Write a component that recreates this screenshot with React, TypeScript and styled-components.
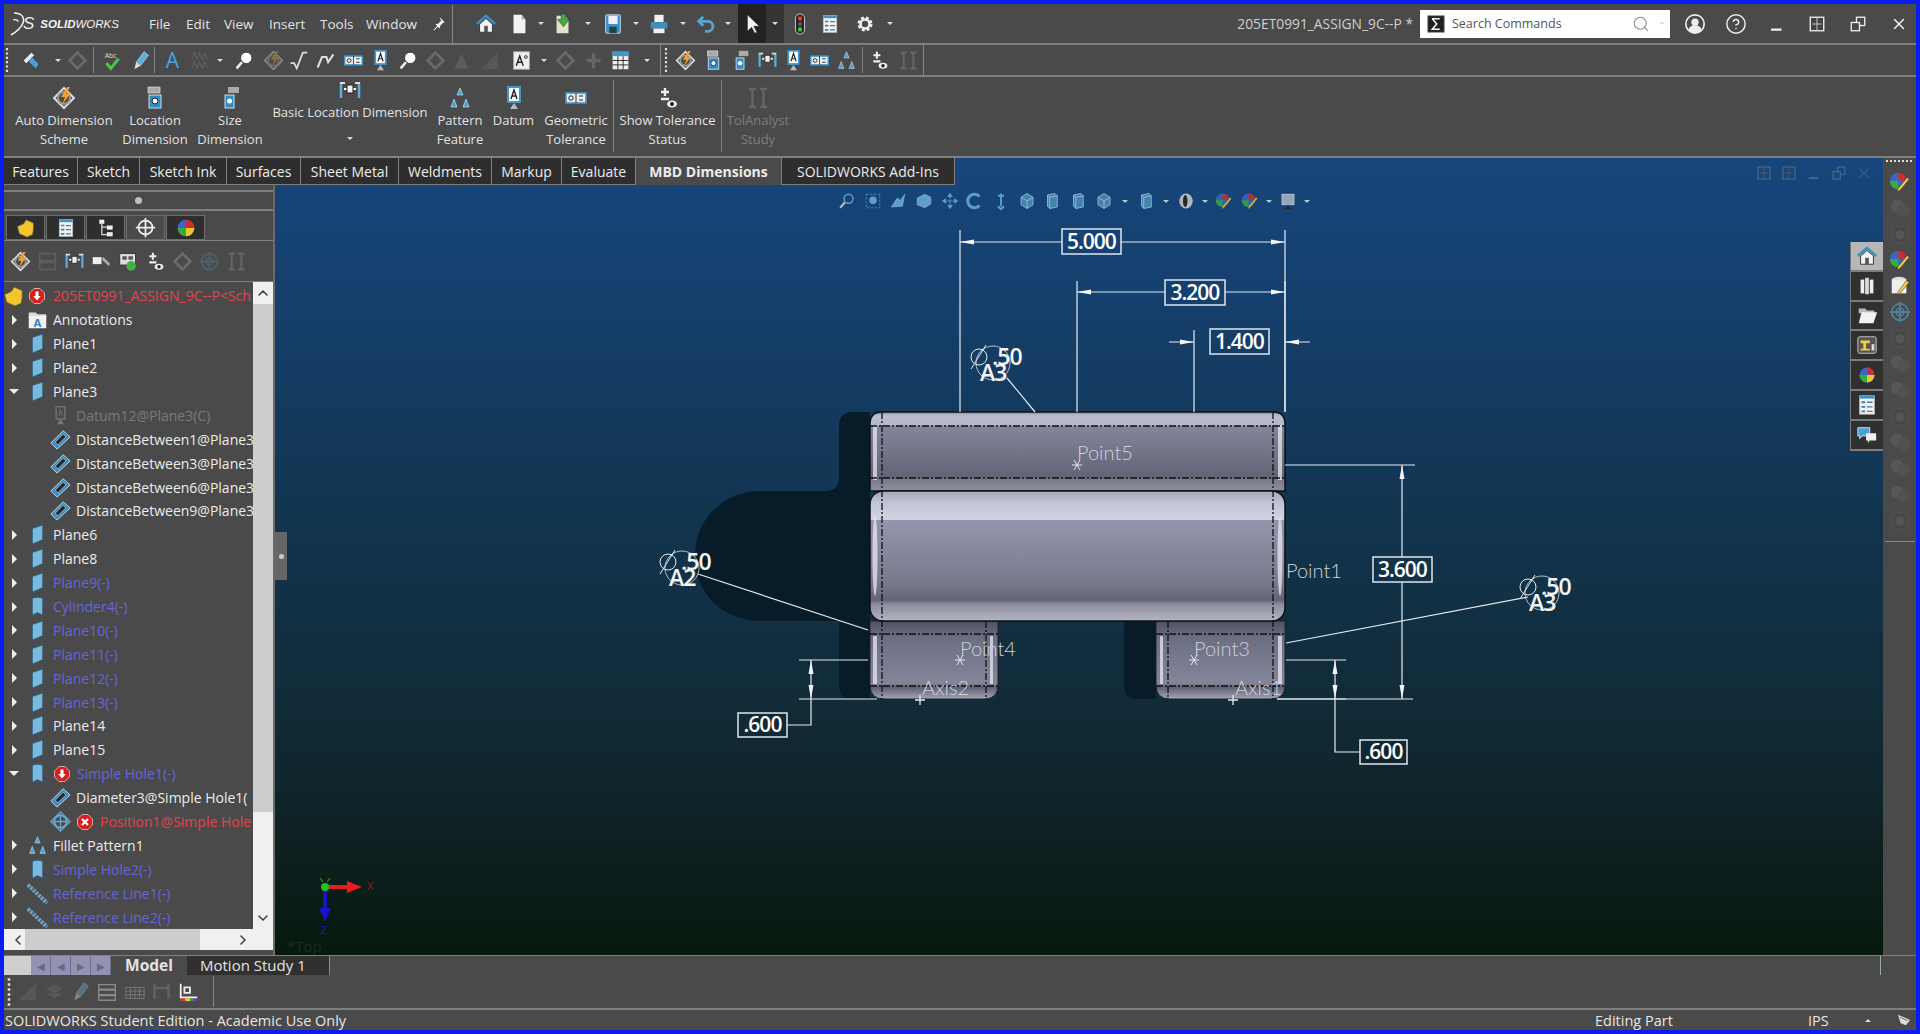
import React from "react";
import styled, { createGlobalStyle } from "styled-components";
import { ChevronDown, ChevronLeft, ChevronRight, ChevronUp, CircleHelp, Search, X } from "lucide-react";

const GlobalStyle = createGlobalStyle`
  html, body { margin: 0; padding: 0; height: 100%; overflow: hidden; }
  body { font-family: "Open Sans", "Noto Sans", "Liberation Sans", sans-serif; font-size: 14px; color: #e8e8e8; background: #0a1cf0; }
  #root { height: 100%; }
`;

const icons: Record<string, React.ReactNode> = {
  home: (<><path d="M5 12v9h14v-9L12 6z" fill="#f4f4f4" stroke="#333" /><rect x="10" y="14" width="4" height="7" fill="#555" /><path d="M2 12 12 3l10 9" stroke="#3a8fc0" strokeWidth="2.6" fill="none" /></>),
  doc: (<><path d="M6 2h9l4 5v15H6z" fill="#f2f2f2" /><path d="M15 2v5h4z" fill="#aaa" /></>),
  open: (<><path d="M5 3h9l4 5v14H5z" fill="#e6e2c8" /><path d="M10 1h5v6h4l-6.500 8L6 7h4z" fill="#3fae3a" stroke="#123" strokeWidth=".5" /></>),
  save: (<><rect x="4" y="2" width="16" height="20" rx="1" fill="#3d8fc4" stroke="#cde" /><rect x="7" y="3" width="10" height="9" fill="#eef" /><rect x="8" y="15" width="8" height="7" fill="#244" /></>),
  print: (<><rect x="7" y="2" width="10" height="8" fill="#f2f2f2" /><rect x="3" y="10" width="18" height="7" fill="#3d8fc4" /><rect x="6" y="17" width="12" height="5" fill="#f2f2f2" /></>),
  undo: (<path d="M9 4 4 9l5 5M5 9h9a5 5 0 0 1 0 11h-3" fill="none" stroke="#5aa5d0" strokeWidth="3" />),
  cursor: (<path d="M7 2v18l4.500-4.500L15 22l2.500-1-3.500-6.500h6z" fill="#f4f4f4" stroke="#222" strokeWidth=".6" />),
  light: (<><rect x="7" y="1" width="10" height="22" rx="5" fill="#222" stroke="#ddd" /><circle cx="12" cy="6" r="2.400" fill="#e33" /><circle cx="12" cy="12" r="2.400" fill="#555" /><circle cx="12" cy="18" r="2.400" fill="#3c3" /></>),
  list: (<><rect x="4" y="2" width="16" height="20" fill="#f2f2f2" stroke="#bbb" /><rect x="4" y="2" width="16" height="3" fill="#3d8fc4" /><path d="M6 8h4v2H6zM6 13h4v2H6zM6 18h4v2H6z" fill="#3d7fae" /><path d="M12 9h6M12 14h6M12 19h6" stroke="#3d7fae" strokeWidth="1.500" /></>),
  gear: (<><circle cx="12" cy="12" r="6" fill="none" stroke="#eee" strokeWidth="3.500" /><circle cx="12" cy="12" r="8.500" fill="none" stroke="#eee" strokeWidth="3" strokeDasharray="4 2.700" /></>),
  pin: (<path d="M14 2l8 8-3 1-4 4-1 5-3-3-6 6-1-1 6-6-3-3 5-1 4-4z" fill="#f2f2f2" />),
  auto: (<><path d="M12 2l10 10-10 10L2 12z" fill="none" stroke="#ddd" strokeWidth="2" /><circle cx="12" cy="12" r="6" fill="none" stroke="#999" strokeWidth="2" /><path d="M15 1l-6 10h4l-3 8 8-11h-4l4-7z" fill="#f0a030" /></>),
  loc: (<><rect x="5" y="1" width="12" height="6" fill="#aaa" stroke="#eee" strokeWidth=".6" /><rect x="6" y="9" width="12" height="13" fill="#2f8ec4" stroke="#cde" /><circle cx="12" cy="15" r="3" fill="#fff" stroke="#123" /></>),
  size: (<><rect x="10" y="1" width="11" height="6" fill="#aaa" /><rect x="7" y="9" width="9" height="13" fill="#2f8ec4" stroke="#cde" /><circle cx="11.500" cy="15" r="2.500" fill="#fff" /></>),
  basic: (<><path d="M3 4v15M21 4v15" stroke="#5ab0dc" strokeWidth="2.500" /><path d="M2 4h5M17 4h5" stroke="#ddd" strokeWidth="2" /><path d="M6 10h12" stroke="#fff" strokeWidth="2" /><rect x="9" y="6" width="6" height="8" fill="#eee" stroke="#222" /></>),
  pattern: (<path d="M12 2l3 7H9zM6 13l3 8H3zM18 13l3 8h-6z" fill="#4aa2d4" stroke="#bde" strokeWidth=".7" />),
  datum: (<><rect x="6" y="1" width="12" height="15" fill="#fff" stroke="#3d98cf" strokeWidth="2" /><path d="M9 13l3-9 3 9M10 10h4" fill="none" stroke="#222" strokeWidth="1.400" /><path d="M8 23l4-6 4 6z" fill="#bbb" /></>),
  geo: (<><rect x="2" y="7" width="20" height="10" fill="#eee" stroke="#3d98cf" strokeWidth="1.600" /><path d="M12 7v10" stroke="#333" /><circle cx="7" cy="12" r="2.200" fill="none" stroke="#222" /><path d="M15 10h4M15 14h4" stroke="#222" /></>),
  tol: (<><path d="M9 2v8M5 6h8M5 13h8" stroke="#eee" strokeWidth="2.400" /><ellipse cx="16" cy="18" rx="5" ry="3.500" fill="#eee" /><circle cx="16" cy="18" r="2" fill="#222" /></>),
  analyst: (<path d="M3 3h7M6.500 3v18M3 21h7M14 3h7M17.500 3v18M14 21h7M12 9h0" fill="none" stroke="#8a8a8a" strokeWidth="2.400" />),
  select: (<><path d="M3 12 12 3l3 3-9 9z" fill="#eee" /><path d="M12 8l8 8-3 5-8-8z" fill="#4aa2d4" /></>),
  tool: (<path d="M3 12 12 3l9 9-9 9z" fill="none" stroke="#9a9a9a" strokeWidth="3" />),
  check: (<><text x="3" y="9" fontSize="8" fill="#ddd" fontFamily="Open Sans">Abc</text><path d="M5 15l5 6 9-11" fill="none" stroke="#4ec24a" strokeWidth="3.500" /></>),
  brush: (<><path d="M16 2l5 4-9 12-5-4z" fill="#5ab0dc" stroke="#dde" strokeWidth=".7" /><path d="M5 22l2-8 5 4z" fill="#ddd" /></>),
  letter: (<text x="12" y="21" textAnchor="middle" fontSize="24" fill="#4aa2e0" fontFamily="Open Sans">A</text>),
  triple: (<path d="M3 21l3-8 3 8M9 21l3-8 3 8M15 21l3-8 3 8M3 11l3-8 3 8M9 11l3-8 3 8M15 11l3-8 3 8" fill="none" stroke="#808080" strokeWidth="1.300" />),
  magnify: (<><circle cx="14" cy="9" r="6.500" fill="#fff" stroke="#333" /><path d="M9 14l-6 7" stroke="#eee" strokeWidth="3" /></>),
  note: (<path d="M3 15h4l3 6L17 3h5" fill="none" stroke="#ddd" strokeWidth="2" />),
  weld: (<path d="M3 20 8 8h5l2 6 6-9" fill="none" stroke="#ddd" strokeWidth="2.400" />),
  tri: (<path d="M12 4l8 17H4z" fill="#787878" />),
  hatch: (<path d="M2 22 22 2v20z" fill="#6a6a6a" />),
  adeg: (<><rect x="3" y="2" width="18" height="20" fill="#eee" stroke="#aaa" /><path d="M6 18l4-11 4 11M8 14h4" fill="none" stroke="#222" strokeWidth="1.600" /><circle cx="17" cy="8" r="1.600" fill="none" stroke="#222" /></>),
  table: (<><rect x="3" y="2" width="18" height="20" fill="#eee" /><rect x="3" y="2" width="18" height="5" fill="#3d98cf" /><path d="M3 12h18M3 17h18M9 7v15M15 7v15" stroke="#222" /></>),
  ctr: (<path d="M4 12h16M12 3v18" stroke="#8a8a8a" strokeWidth="4" />),
  part: (<path d="M2 10l7-3 3-5 9 4v8l-1 6-7 3-9-4-2-7z" fill="#f4c430" stroke="#554" />),
  configTree: (<><rect x="4" y="2" width="6" height="5" fill="#eee" /><rect x="13" y="9" width="7" height="5" fill="#eee" /><rect x="13" y="17" width="7" height="5" fill="#eee" /><path d="M7 7v13h6M7 11h6" fill="none" stroke="#ddd" strokeWidth="1.500" /></>),
  cross: (<><circle cx="12" cy="12" r="8" fill="none" stroke="#eee" strokeWidth="2" /><path d="M12 1v22M1 12h22" stroke="#eee" strokeWidth="2" /></>),
  ball: (<><circle cx="12" cy="12" r="10" fill="#3568c8" /><path d="M2 12a10 10 0 0 0 10 10V12z" fill="#3aaa3a" /><path d="M12 22a10 10 0 0 0 10-10H12z" fill="#e8c830" /><path d="M12 2a10 10 0 0 1 10 10l-10-1z" fill="#d42a2a" /></>),
  ballPen: (<><circle cx="10" cy="11" r="9" fill="#3568c8" /><path d="M1 11a9 9 0 0 0 9 9v-9z" fill="#3aaa3a" /><path d="M10 2a9 9 0 0 1 9 9l-9-1z" fill="#d42a2a" /><path d="M22 9 12 21l-3 2 1-4L20 7z" fill="#f0d040" stroke="#333" strokeWidth=".6" /></>),
  grayBalls: (<><circle cx="9" cy="10" r="7" fill="#6a6a6a" /><circle cx="16" cy="14" r="7" fill="#5c5c5c" /></>),
  linked: (<><path d="M4 4h16v18H4z" fill="#444" stroke="#666" /><circle cx="12" cy="13" r="5" fill="#666" /></>),
  drum: (<><ellipse cx="11" cy="5" rx="8" ry="3" fill="#ddd" /><rect x="3" y="5" width="16" height="15" fill="#eee" /><path d="M22 8 12 20l-2 2 0-4L19 6z" fill="#f0d040" stroke="#333" strokeWidth=".6" /></>),
  blueTarget: (<><circle cx="12" cy="12" r="9" fill="none" stroke="#4f7f98" strokeWidth="2" /><circle cx="12" cy="12" r="4" fill="none" stroke="#4f7f98" strokeWidth="2" /><path d="M12 1v22M1 12h22" stroke="#4f7f98" strokeWidth="2" /></>),
  posTarget: (<><circle cx="12" cy="12" r="7" fill="none" stroke="#67abd0" strokeWidth="2" /><path d="M12 1l11 11-11 11L1 12z" fill="none" stroke="#67abd0" strokeWidth="1.500" /><path d="M12 3v18M3 12h18" stroke="#67abd0" strokeWidth="1.500" /></>),
  parts: (<><rect x="5" y="5" width="4" height="15" fill="#eee" /><rect x="10" y="3" width="4" height="18" fill="#ddd" /><rect x="15" y="5" width="4" height="15" fill="#eee" /></>),
  folder: (<><path d="M3 5h7l2 2h8v3H3z" fill="#bbb" /><path d="M3 21l3-12h17l-4 12z" fill="#f2f2f2" /></>),
  palette: (<><rect x="2" y="3" width="20" height="18" rx="2" fill="#555" stroke="#ccc" /><path d="M5 7h10v3H5zM8 10h3v6H8zM5 16h10v2H5z" fill="#f0d040" /><rect x="17" y="11" width="3" height="7" fill="#ddd" /></>),
  chat: (<><path d="M2 4h13v9H7l-3 3v-3H2z" fill="#4aa2d4" stroke="#dde" /><path d="M11 10h11v8h-7l-2 3v-3h-2z" fill="#eee" /></>),
  plane: (<path d="M6 5l12-4v17L6 23z" fill="#79b9dc" stroke="#2a5a78" />),
  hole: (<path d="M6 4a6 2.500 0 0 1 12 0v18l-6-3-6 3z" fill="#79b9dc" stroke="#2a5a78" />),
  annot: (<><path d="M2 4h8l2 2h10v4H2z" fill="#ddd" /><rect x="2" y="8" width="20" height="14" fill="#f2f2f2" /><text x="12" y="21" fontSize="13" textAnchor="middle" fontWeight="700" fill="#3a80b0" fontFamily="Open Sans">A</text></>),
  dimTag: (<><path d="M1 16 15 2l8 7L8 23z" fill="#3f8fc0" stroke="#cde" /><path d="M6 15 15 6l3 3-9 9z" fill="#222" stroke="#ddd" strokeWidth=".7" /></>),
  dDatum: (<><rect x="7" y="2" width="10" height="14" fill="none" stroke="#777" strokeWidth="1.500" /><path d="M10 13l2-8 2 8" fill="none" stroke="#777" /><path d="M8 22l4-6 4 6z" fill="#777" /></>),
  stop: (<><path d="M8 2h8l6 6v8l-6 6H8l-6-6V8z" fill="#d71f1f" stroke="#f2d0d0" /><path d="M10 6h4v6h3l-5 6-5-6h3z" fill="#fff" /></>),
  err: (<><path d="M8 2h8l6 6v8l-6 6H8l-6-6V8z" fill="#d71f1f" stroke="#f2d0d0" /><path d="M8 8l8 8M16 8l-8 8" stroke="#fff" strokeWidth="3" /></>),
  chain: (<path d="M1 2l22 21" stroke="#6aa6c8" strokeWidth="4.500" strokeDasharray="3 1.200" />),
  green: (<><rect x="2" y="3" width="18" height="13" fill="#ddd" stroke="#333" /><path d="M5 6h5v4H5zM12 6h5v4h-5z" fill="#555" /><circle cx="15" cy="17" r="5.500" fill="#43b043" /></>),
  arrowBox: (<><rect x="2" y="7" width="10" height="8" fill="#eee" /><path d="M13 8l8 8" stroke="#aaa" strokeWidth="3" /></>),
  geoDim: (<><rect x="3" y="3" width="18" height="8" fill="none" stroke="#7a7a7a" strokeWidth="2" /><rect x="3" y="13" width="18" height="8" fill="none" stroke="#7a7a7a" strokeWidth="2" /></>),
  rollback: (<path d="M4 4v16M20 4v16M4 8h16" stroke="#858585" strokeWidth="3" />),
  stack: (<path d="M3 9l9-5 9 5-9 5zM3 14l9 5 9-5" fill="#6d6d6d" stroke="#6d6d6d" />),
  bars: (<path d="M3 4h18v5H3zM3 10h18v5H3zM3 16h18v5H3z" fill="none" stroke="#8a8a8a" strokeWidth="1.500" />),
  grid: (<path d="M2 7h20v12H2zM2 11h20M2 15h20M7 7v12M12 7v12M17 7v12" fill="none" stroke="#7a7a7a" />),
  graph: (<><path d="M3 3v15h18M7 7h6v6H7z" fill="none" stroke="#eee" strokeWidth="2" /><path d="M3 19h5v3H3z" fill="#e33" /><path d="M8 19h5v3H8z" fill="#ec3" /><path d="M13 19h4v3h-4z" fill="#3a3" /><path d="M17 19h4v3h-4z" fill="#63d" /></>),
  eject: (<><path d="M3 4 21 12 15 20 7 17z" fill="#ddd" /><path d="M6 8l11 5" stroke="#333" /></>),
  sum: (<><rect x="1" y="1" width="22" height="22" fill="#222" stroke="#888" /><path d="M7 5h10M7 5l6 7-6 7h10" fill="none" stroke="#fff" strokeWidth="2" /></>),
  user: (<><circle cx="12" cy="12" r="10" fill="none" stroke="#eee" strokeWidth="1.800" /><circle cx="12" cy="10" r="4" fill="#eee" /><path d="M5 19a7 6 0 0 1 14 0 10 10 0 0 1-14 0z" fill="#eee" /></>),
  tile: (<><rect x="3" y="3" width="18" height="18" fill="#444" stroke="#eee" strokeWidth="1.800" /><path d="M12 3v18M6 12h12" stroke="#eee" /></>),
  restore: (<><rect x="10" y="3" width="11" height="11" fill="none" stroke="#eee" strokeWidth="1.800" /><rect x="3" y="10" width="11" height="11" fill="#4a4a4a" stroke="#eee" strokeWidth="1.800" /></>),
  minus: (<rect x="4" y="18" width="14" height="3" fill="#eee" />),
  zoomFit: (<><circle cx="14" cy="9" r="6" fill="none" stroke="#6ab0d8" strokeWidth="2" /><path d="M9 14l-6 7" stroke="#ccc" strokeWidth="3" /></>),
  zoomArea: (<><rect x="3" y="3" width="18" height="18" fill="none" stroke="#6ab0d8" strokeDasharray="3 2" /><circle cx="12" cy="11" r="5" fill="#6ab0d8" /></>),
  prevView: (<path d="M3 20l8-12 4 3 6-8-3 16z" fill="#6ab0d8" stroke="#bde" strokeWidth=".6" />),
  section: (<path d="M3 8l10-5 8 4v9l-8 5-10-4z" fill="#6ab0d8" stroke="#cde" strokeWidth=".7" />),
  move: (<path d="M12 2v20M2 12h20M12 2l-3 4h6zM12 22l-3-4h6zM2 12l4-3v6zM22 12l-4-3v6z" fill="#6ab0d8" stroke="#6ab0d8" />),
  rotate: (<path d="M18 6a9 9 0 1 0 0 12" fill="none" stroke="#6ab0d8" strokeWidth="4" />),
  spin: (<path d="M12 2v17M8 19l4 4 4-4M8 5h8" fill="none" stroke="#6ab0d8" strokeWidth="2.500" />),
  cube: (<><path d="M12 2l8 5v10l-8 5-8-5V7z" fill="#4b8db8" stroke="#cde" /><path d="M4 7l8 5 8-5M12 12v10" fill="none" stroke="#cde" /></>),
  cubeTall: (<><path d="M6 4l10-2 3 3v15l-10 2-3-3z" fill="#4b8db8" stroke="#cde" /><path d="M6 4l3 3 10-2M9 7v15" fill="none" stroke="#cde" /></>),
  eye: (<><ellipse cx="12" cy="12" rx="9" ry="10" fill="#ccc" /><ellipse cx="11" cy="12" rx="3" ry="8" fill="#222" /></>),
  monitor: (<><rect x="4" y="3" width="16" height="14" fill="#a8b8c4" stroke="#eee" /><path d="M12 17v4M8 22h8" stroke="#222" strokeWidth="2" /></>),
  grip: (<path d="M12 1v22" stroke="#ddd" strokeWidth="2" strokeDasharray="2 2" />),
  swoosh: (<><path d="M6 1c8 0 11 5 9 10S8 20 3 23" fill="none" stroke="#f2f2f2" strokeWidth="1.600" /><path d="M5 8c3-1 5 0 5 2" fill="none" stroke="#f2f2f2" strokeWidth="1.300" /></>),
};

const Frame = styled.div`
  box-sizing: border-box;
  width: 100%;
  height: 100vh;
  min-height: 1034px;
  padding: 4px;
  background: #0a1cf0;
  display: flex;
  flex-direction: column;
`;

const Bar = styled.div<{ $h: number; $line?: boolean }>`
  box-sizing: border-box;
  height: ${(p) => p.$h}px;
  flex: none;
  display: flex;
  align-items: center;
  background: #4a4a4a;
  border-bottom: ${(p) => (p.$line ? "2px solid #7f7f7f" : "none")};
`;

const IconSvg = styled.svg<{ $dim?: boolean }>`
  flex: none;
  display: block;
  opacity: ${(p) => (p.$dim ? 0.42 : 1)};
`;

const Ico: React.FC<{ n: string; s?: number; dim?: boolean }> = ({ n, s = 22, dim }) => (
  <IconSvg viewBox="0 0 24 24" width={s} height={s} $dim={dim}>
    {icons[n]}
  </IconSvg>
);

const Caret = styled.span<{ $up?: boolean; $w?: number }>`
  flex: none;
  width: ${(p) => p.$w ?? 10}px;
  display: flex;
  justify-content: center;
  &::before {
    content: "";
    border-left: 3px solid transparent;
    border-right: 3px solid transparent;
    border-top: ${(p) => (p.$up ? "none" : "3px solid #ddd")};
    border-bottom: ${(p) => (p.$up ? "3px solid #ddd" : "none")};
  }
`;

const Logo = styled.div`
  flex: none;
  width: 145px;
  padding-left: 4px;
  box-sizing: border-box;
  display: flex;
  align-items: center;
`;

const LogoMark = styled.span`
  font-family: "Liberation Sans", sans-serif;
  font-style: italic;
  font-size: 17px;
  color: #f0f0f0;
  margin: 0 6px 0 -9px;
`;

const LogoWord = styled.span`
  font-family: "Liberation Sans", sans-serif;
  font-style: italic;
  font-size: 11.500px;
  color: #f4f4f4;
  white-space: nowrap;
  b { font-weight: 700; }
`;

const Menu = styled.span<{ $w: number }>`
  width: ${(p) => p.$w}px;
  flex: none;
  font-size: 13.500px;
  color: #e4e4e4;
`;

const VDivider = styled.div<{ $h?: number; $mx?: number }>`
  flex: none;
  width: 1px;
  height: ${(p) => p.$h ?? 30}px;
  margin: 0 ${(p) => p.$mx ?? 0}px;
  background: #858585;
`;

const Slot = styled.span<{ $w: number; $bg?: string }>`
  flex: none;
  width: ${(p) => p.$w}px;
  height: 100%;
  display: flex;
  align-items: center;
  justify-content: center;
  background: ${(p) => p.$bg ?? "transparent"};
`;

const CaretCell = styled(Caret)`
  height: 100%;
  align-items: center;
  background: #343434;
`;

const Spacer = styled.div`
  flex: 1;
`;

const DocTitle = styled.span`
  font-size: 13.800px;
  color: #cfcfcf;
  margin-right: 7px;
  white-space: nowrap;
`;

const SearchBox = styled.div`
  box-sizing: border-box;
  flex: none;
  width: 250px;
  height: 28px;
  background: #fff;
  display: flex;
  align-items: center;
  padding: 0 3px 0 7px;
  gap: 7px;
`;

const SearchLabel = styled.span`
  flex: 1;
  color: #555;
  font-size: 12.500px;
  white-space: nowrap;
`;

const Ribbon = styled(Bar)`
  align-items: stretch;
`;

const RibbonBtn = styled.div<{ $w: number; $dim?: boolean; $pl?: number }>`
  flex: none;
  box-sizing: border-box;
  width: ${(p) => p.$w}px;
  padding: 9px 0 0 ${(p) => p.$pl ?? 0}px;
  display: flex;
  flex-direction: column;
  align-items: center;
  text-align: center;
  line-height: 19px;
  font-size: 13px;
  white-space: nowrap;
  color: ${(p) => (p.$dim ? "#7e7e7e" : "#e2e2e2")};
  svg { margin-bottom: 1px; }
`;

const RibbonWide = styled(RibbonBtn)`
  padding-top: 2px;
  svg { margin-bottom: 0; }
`;

const RibbonCaret = styled(Caret)`
  margin-top: 15px;
`;

const RibbonSep = styled.div`
  flex: none;
  width: 1px;
  margin: 3px 0 4px;
  background: #858585;
`;

const TabStrip = styled.div`
  position: absolute;
  left: 0;
  top: 0;
  height: 27px;
  display: flex;
  z-index: 2;
`;

const TopTab = styled.div<{ $w: number; $on?: boolean }>`
  flex: none;
  box-sizing: border-box;
  width: ${(p) => p.$w}px;
  display: flex;
  align-items: center;
  justify-content: center;
  font-size: 14px;
  font-weight: ${(p) => (p.$on ? 700 : 400)};
  color: #ececec;
  background: ${(p) => (p.$on ? "#4a4a4a" : "#2e2e2e")};
  border-right: 1px solid #7f7f7f;
  border-bottom: ${(p) => (p.$on ? "none" : "1px solid #7f7f7f")};
  white-space: nowrap;
`;

const Main = styled.div`
  position: relative;
  flex: 1;
  min-height: 0;
  display: flex;
`;

const Panel = styled.div`
  flex: none;
  box-sizing: border-box;
  width: 271px;
  padding-top: 27px;
  display: flex;
  flex-direction: column;
  background: #4a4a4a;
  border-right: 2px solid #6b6b6b;
`;

const PanelHead = styled.div`
  flex: none;
  height: 21px;
  margin-top: 5px;
  border-top: 2px solid #7f7f7f;
  border-bottom: 2px solid #7f7f7f;
  box-sizing: border-box;
  display: flex;
  align-items: center;
  justify-content: center;
  &::before {
    content: "";
    width: 7px;
    height: 7px;
    border-radius: 50%;
    background: #c0c0c0;
  }
`;

const PanelTabs = styled.div`
  flex: none;
  height: 30px;
  padding: 4px 0 0 2px;
  gap: 1px;
  box-sizing: border-box;
  display: flex;
  border-bottom: 1px solid #7f7f7f;
`;

const PanelTab = styled.div<{ $on?: boolean }>`
  box-sizing: border-box;
  width: 39px;
  display: flex;
  align-items: center;
  justify-content: center;
  background: ${(p) => (p.$on ? "#4a4a4a" : "#2e2e2e")};
  border: 1px solid #6d6d6d;
`;

const PanelTools = styled.div`
  flex: none;
  height: 41px;
  display: flex;
  align-items: center;
  padding-left: 6px;
  gap: 6px;
  border-bottom: 1px solid #7f7f7f;
  box-sizing: border-box;
`;

const TreeWrap = styled.div`
  flex: none;
  height: 647px;
  display: flex;
`;

const Tree = styled.div`
  flex: 1;
  min-width: 0;
  padding-top: 2px;
  overflow: hidden;
`;

const Row = styled.div`
  height: 23.900px;
  display: flex;
  align-items: center;
  white-space: nowrap;
  overflow: hidden;
`;

const Arrow = styled.span<{ $open?: boolean }>`
  &::before {
    content: "";
    display: block;
    ${(p) =>
      p.$open
        ? "border-left: 5px solid transparent; border-right: 5px solid transparent; border-top: 5px solid #eee;"
        : "border-top: 5px solid transparent; border-bottom: 5px solid transparent; border-left: 5px solid #eee;"}
  }
`;

const Label = styled.span<{ $tone?: string }>`
  padding-left: 3px;
  font-size: 14px;
  color: ${(p) => p.$tone ?? "#ececec"};
`;

const VScroll = styled.div`
  flex: none;
  width: 20px;
  display: flex;
  flex-direction: column;
  background: #f0f0f0;
  color: #444;
`;

const ScrollBtn = styled.div`
  flex: none;
  height: 22px;
  display: flex;
  align-items: center;
  justify-content: center;
`;

const VThumb = styled.div`
  flex: none;
  height: 508px;
  background: #cdcdcd;
`;

const HScroll = styled.div`
  position: relative;
  flex: none;
  height: 21px;
  display: flex;
  align-items: center;
  background: #f0f0f0;
  color: #444;
`;

const HThumb = styled.div`
  width: 175px;
  height: 100%;
  margin-left: 21px;
  background: #cdcdcd;
`;

const HRight = styled.div`
  width: 46px;
  padding-left: 8px;
  display: flex;
  box-sizing: border-box;
`;

const HLeft = styled.div`
  position: absolute;
  left: 6px;
  display: flex;
`;

const Viewport = styled.div`
  flex: 1;
  min-width: 0;
  position: relative;
  overflow: hidden;
  background: linear-gradient(180deg, #17467c 0%, #153f6c 18%, #123550 44%, #112c3a 66%, #10252c 79%, #07180c 100%);
`;

const Scene = styled.svg`
  display: block;
  width: 100%;
  height: 100%;
`;

const DimText = styled.text`
  font-family: "Open Sans", "Liberation Sans", sans-serif;
  font-size: 21px;
  font-weight: 600;
  letter-spacing: -1px;
  fill: #fff;
  text-anchor: middle;
`;

const NoteText = styled.text`
  font-family: "Open Sans", "Liberation Sans", sans-serif;
  font-size: 23px;
  font-weight: 600;
  letter-spacing: -1px;
  fill: #f4f4f4;
  stroke: none;
`;

const ModelText = styled.text`
  font-family: "Lato", "Liberation Sans", sans-serif;
  font-size: 20px;
  font-weight: 300;
  fill: #cfd2da;
`;

const HudBar = styled.div`
  position: absolute;
  left: 559px;
  top: 31px;
  display: flex;
  align-items: center;
  height: 24px;
  opacity: 0.85;
`;

const HudSlot = styled.span<{ $w: number }>`
  width: ${(p) => p.$w}px;
  display: flex;
  justify-content: center;
  align-items: center;
`;

const ViewCtrls = styled.div`
  position: absolute;
  right: 11px;
  top: 7px;
  display: flex;
  align-items: center;
  gap: 9px;
  opacity: 0.2;
`;

const TaskTabs = styled.div`
  position: absolute;
  right: 0;
  top: 84px;
  width: 32px;
  display: flex;
  flex-direction: column;
  border-left: 1px solid #777;
`;

const TaskTab = styled.div<{ $on?: boolean }>`
  box-sizing: border-box;
  height: 29.800px;
  display: flex;
  align-items: center;
  justify-content: center;
  background: ${(p) => (p.$on ? "#b7b7b7" : "#303030")};
  border-bottom: 2px solid #7d7d7d;
`;

const SideHandle = styled.div`
  position: absolute;
  left: 0;
  top: 374px;
  width: 12px;
  height: 48px;
  background: #666;
  display: flex;
  align-items: center;
  justify-content: center;
  &::before {
    content: "";
    width: 5px;
    height: 5px;
    border-radius: 50%;
    background: #ccc;
  }
`;

const RightBar = styled.div`
  flex: none;
  width: 33px;
  background: #4a4a4a;
  display: flex;
  flex-direction: column;
  align-items: center;
  padding-top: 2px;
  gap: 4px;
`;

const GripH = styled.div`
  width: 28px;
  height: 2px;
  margin-bottom: 5px;
  background: repeating-linear-gradient(90deg, #ddd 0 2px, transparent 2px 4px);
`;

const RightEnd = styled.div`
  width: 30px;
  height: 1px;
  margin-top: 6px;
  background: #8a8a8a;
`;

const NavBlock = styled.div`
  width: 27px;
  height: 100%;
  background: #cfcfcf;
`;

const NavBtn = styled.div`
  width: 20px;
  height: 100%;
  box-sizing: border-box;
  background: #9293b2;
  border-right: 1px solid #6f708c;
  display: flex;
  align-items: center;
  justify-content: center;
  color: #6a6a78;
  font-size: 10px;
`;

const ModelTab = styled.div<{ $w: number; $on?: boolean }>`
  box-sizing: border-box;
  width: ${(p) => p.$w}px;
  height: 100%;
  display: flex;
  align-items: center;
  justify-content: ${(p) => (p.$on ? "center" : "flex-start")};
  padding: 0 0 2px ${(p) => (p.$on ? 0 : 13)}px;
  font-size: ${(p) => (p.$on ? 15.500 : 15)}px;
  font-weight: ${(p) => (p.$on ? 700 : 400)};
  color: #e4e4e4;
  background: ${(p) => (p.$on ? "transparent" : "#303030")};
  border-right: ${(p) => (p.$on ? "none" : "1px solid #8a8a8a")};
`;

const BottomStrip = styled(Bar)`
  border-top: 1px solid #7f7f7f;
  padding-right: 35px;
`;

const StripEnd = styled.div`
  margin-left: auto;
  width: 1px;
  height: 100%;
  background: #9aa;
`;

const StatusBar = styled(Bar)`
  border-top: 2px solid #7f7f7f;
  font-size: 14.500px;
  padding-left: 1px;
  color: #e6e6e6;
`;

const StatusItem = styled.span<{ $w: number }>`
  flex: none;
  width: ${(p) => p.$w}px;
`;

const tree: { a?: "c" | "o"; i?: string; x?: string; t: string; c?: string; lvl?: number; root?: boolean }[] = [
  { root: true, i: "part", x: "stop", t: "205ET0991_ASSIGN_9C--P<Sch", c: "#e2434d" },
  { a: "c", i: "annot", t: "Annotations" },
  { a: "c", i: "plane", t: "Plane1" },
  { a: "c", i: "plane", t: "Plane2" },
  { a: "o", i: "plane", t: "Plane3" },
  { lvl: 1, i: "dDatum", t: "Datum12@Plane3(C)", c: "#7b7b7b" },
  { lvl: 1, i: "dimTag", t: "DistanceBetween1@Plane3" },
  { lvl: 1, i: "dimTag", t: "DistanceBetween3@Plane3" },
  { lvl: 1, i: "dimTag", t: "DistanceBetween6@Plane3" },
  { lvl: 1, i: "dimTag", t: "DistanceBetween9@Plane3" },
  { a: "c", i: "plane", t: "Plane6" },
  { a: "c", i: "plane", t: "Plane8" },
  { a: "c", i: "plane", t: "Plane9(-)", c: "#6565dc" },
  { a: "c", i: "hole", t: "Cylinder4(-)", c: "#6565dc" },
  { a: "c", i: "plane", t: "Plane10(-)", c: "#6565dc" },
  { a: "c", i: "plane", t: "Plane11(-)", c: "#6565dc" },
  { a: "c", i: "plane", t: "Plane12(-)", c: "#6565dc" },
  { a: "c", i: "plane", t: "Plane13(-)", c: "#6565dc" },
  { a: "c", i: "plane", t: "Plane14" },
  { a: "c", i: "plane", t: "Plane15" },
  { a: "o", i: "hole", x: "stop", t: "Simple Hole1(-)", c: "#6565dc" },
  { lvl: 1, i: "dimTag", t: "Diameter3@Simple Hole1(" },
  { lvl: 1, i: "posTarget", x: "err", t: "Position1@Simple Hole", c: "#e2434d" },
  { a: "c", i: "pattern", t: "Fillet Pattern1" },
  { a: "c", i: "hole", t: "Simple Hole2(-)", c: "#6565dc" },
  { a: "c", i: "chain", t: "Reference Line1(-)", c: "#6565dc" },
  { a: "c", i: "chain", t: "Reference Line2(-)", c: "#6565dc" },
];

const tool2: [string | null, number, boolean?][] = [
  ["select", 43], ["caret", 10], ["tool", 28, true], ["sep", 1], ["check", 32], ["brush", 24], ["sep", 1], ["letter", 30], ["triple", 24, true], ["caret", 18],
  ["magnify", 30], ["auto", 28, true], ["note", 23], ["weld", 30], ["geo", 26], ["datum", 28], ["magnify", 28], ["tool", 26, true], ["tri", 26, true], ["hatch", 30, true],
  ["adeg", 34], ["caret", 12], ["tool", 30, true], ["ctr", 26, true], ["table", 28], ["caret", 26], ["sep2", 1], ["grip", 10], ["auto", 28], ["loc", 28], ["size", 27], ["basic", 26], ["datum", 27],
  ["geo", 25], ["pattern", 28], ["sep", 1], ["tol", 28], ["analyst", 30, true],
];

const hud: [string, number][] = [
  ["zoomFit", 25.700], ["zoomArea", 25.700], ["prevView", 25.700], ["section", 25.700], ["move", 25.700], ["rotate", 25.700], ["spin", 25.700], ["cube", 25.700], ["cubeTall", 25.700], ["cubeTall", 25.700], ["cube", 25.700], ["caret", 16],
  ["cubeTall", 26], ["caret", 14], ["eye", 26], ["caret", 12], ["ballPen", 26], ["ballPen", 26], ["caret", 12], ["monitor", 26], ["caret", 12],
];

const rightIcons: [string, boolean?][] = [
  ["ballPen"], ["grayBalls", true], ["linked", true], ["ballPen"], ["drum"], ["blueTarget"], ["linked", true], ["grayBalls", true], ["grayBalls", true], ["linked", true],
  ["grayBalls", true], ["grayBalls", true], ["grayBalls", true], ["linked", true],
];

const Arrowhead: React.FC<{ x: number; y: number; dir: "l" | "r" | "u" | "d" }> = ({ x, y, dir }) => {
  const l = 14;
  const w = 2.5;
  const pts = {
    l: `${x},${y} ${x + l},${y - w} ${x + l},${y + w}`,
    r: `${x},${y} ${x - l},${y - w} ${x - l},${y + w}`,
    u: `${x},${y} ${x - w},${y + l} ${x + w},${y + l}`,
    d: `${x},${y} ${x - w},${y - l} ${x + w},${y - l}`,
  }[dir];
  return <polygon points={pts} fill="#f2f5f8" />;
};

const DimBox: React.FC<{ x: number; y: number; w: number; h: number; t: string }> = ({ x, y, w, h, t }) => (
  <g>
    <rect x={x} y={y} width={w} height={h} fill="none" stroke="#dfe6ee" strokeWidth="1.500" />
    <DimText x={x + w / 2} y={y + h - 5}>
      {t}
    </DimText>
  </g>
);

const Balloon: React.FC<{ x: number; y: number; t: string }> = ({ x, y, t }) => (
  <g fill="none" stroke="#e8ecf0" strokeWidth="1">
    <circle cx={x + 14} cy={y + 6} r="17" strokeOpacity=".75" />
    <circle cx={x} cy={y} r="8" />
    <path d={`M${x - 8} ${y + 12}L${x + 7} ${y - 12}`} />
    <NoteText x={x + 13} y={y + 8}>.50</NoteText>
    <NoteText x={x + 1} y={y + 24}>{t}</NoteText>
  </g>
);

const Star: React.FC<{ x: number; y: number }> = ({ x, y }) => (
  <path d={`M${x - 5} ${y}h10M${x - 3} ${y - 5}l6 10M${x + 3} ${y - 5}l-6 10`} stroke="#e6e8ee" strokeWidth="1" />
);

const Plus: React.FC<{ x: number; y: number }> = ({ x, y }) => (
  <path d={`M${x - 5} ${y}h10M${x} ${y - 5}v10`} stroke="#e6e8ee" strokeWidth="1.300" />
);

const Model: React.FC = () => (
  <Scene viewBox="275 158 1608 797" preserveAspectRatio="none">
    <defs>
      <linearGradient id="blockFill" x1="0" y1="0" x2="0" y2="1">
        <stop offset="0" stopColor="#8f91a4" />
        <stop offset=".05" stopColor="#bcbfce" />
        <stop offset=".16" stopColor="#b4b7c8" />
        <stop offset=".19" stopColor="#82849a" />
        <stop offset=".82" stopColor="#636577" />
        <stop offset=".85" stopColor="#77798a" />
        <stop offset="1" stopColor="#8e909f" />
      </linearGradient>
      <linearGradient id="cylFill" x1="0" y1="0" x2="0" y2="1">
        <stop offset="0" stopColor="#a5a8bb" />
        <stop offset=".1" stopColor="#c3c6d7" />
        <stop offset=".22" stopColor="#cfd2e2" />
        <stop offset=".225" stopColor="#9396ac" />
        <stop offset=".7" stopColor="#787a8e" />
        <stop offset=".84" stopColor="#636577" />
        <stop offset=".87" stopColor="#8b8d9e" />
        <stop offset="1" stopColor="#b4b6c5" />
      </linearGradient>
      <linearGradient id="footFill" x1="0" y1="0" x2="0" y2="1">
        <stop offset="0" stopColor="#4f5164" />
        <stop offset=".2" stopColor="#6b6d82" />
        <stop offset=".8" stopColor="#83859a" />
        <stop offset=".85" stopColor="#5f6174" />
        <stop offset="1" stopColor="#a4a6b4" />
      </linearGradient>
    </defs>

    <path d="M870 412H853Q839 412 839 426V478Q839 491 825 491H762C722 491 695 520 695 556C695 594 722 621 762 621H839V685Q839 699 853 699H870Z" fill="#071c28" />
    <path d="M1156 621H1124V685Q1124 699 1138 699H1156Z" fill="#071c28" />

    <path d="M870 491V424Q870 412 882 412H1273Q1285 412 1285 424V491Z" fill="url(#blockFill)" stroke="#111" strokeWidth="1.500" />
    <path d="M870 621V685Q870 699 884 699H984Q998 699 998 685V621Z" fill="url(#footFill)" stroke="#222" />
    <path d="M1156 621V685Q1156 699 1170 699H1271Q1285 699 1285 685V621Z" fill="url(#footFill)" stroke="#222" />
    <rect x="870" y="491" width="415" height="130" rx="13" fill="url(#cylFill)" stroke="#111" strokeWidth="1.500" />

    <g fill="#eef0f6" fillOpacity=".7">
      <rect x="873" y="425" width="4" height="55" />
      <rect x="1278" y="425" width="4" height="55" />
      <ellipse cx="875" cy="556" rx="2.500" ry="40" />
      <ellipse cx="1280" cy="556" rx="2.500" ry="40" />
      <rect x="873" y="636" width="4" height="48" />
      <rect x="1160" y="636" width="3" height="48" />
      <rect x="1278" y="636" width="4" height="48" />
      <rect x="990" y="636" width="3" height="48" />
    </g>

    <g stroke="#111" strokeWidth="1.300" fill="none" strokeDasharray="7 2 2 2">
      <path d="M870 426H1285M870 478H1285M882 412V699M1273 412V699" />
      <path d="M870 634H998M870 686H998M986 621V699" />
      <path d="M1156 634H1285M1156 686H1285M1168 621V699" />
    </g>

    <g stroke="#e6ebf0" strokeWidth="1.200" fill="none">
      <path d="M960 230V412M1285 230V412M960 242H1062M1121 242H1285" />
      <path d="M1077 281V412M1285 281V412M1077 292H1165M1225 292H1285" />
      <path d="M1194 330V412M1169 342H1194M1285 342H1310" />
      <path d="M1285 465H1415M1402 465V557M1402 582V699M1277 699H1413" />
      <path d="M799 660H868M799 699H877M811 660V725H787" />
      <path d="M1286 660H1346M1277 699H1346M1335 660V752H1360" />
      <path d="M1007 378L1035 412M698 574L868 630M1528 597L1286 643" />
    </g>
    <Arrowhead x={960} y={242} dir="l" />
    <Arrowhead x={1285} y={242} dir="r" />
    <Arrowhead x={1077} y={292} dir="l" />
    <Arrowhead x={1285} y={292} dir="r" />
    <Arrowhead x={1194} y={342} dir="r" />
    <Arrowhead x={1285} y={342} dir="l" />
    <Arrowhead x={1402} y={699} dir="d" />
    <Arrowhead x={1402} y={465} dir="u" />
    <Arrowhead x={811} y={660} dir="u" />
    <Arrowhead x={811} y={699} dir="d" />
    <Arrowhead x={1335} y={660} dir="u" />
    <Arrowhead x={1335} y={699} dir="d" />

    <DimBox x={1062} y={229} w={59} h={25} t="5.000" />
    <DimBox x={1165} y={280} w={60} h={25} t="3.200" />
    <DimBox x={1210} y={329} w={59} h={25} t="1.400" />
    <DimBox x={1373} y={557} w={59} h={25} t="3.600" />
    <DimBox x={738} y={713} w={49} h={24} t=".600" />
    <DimBox x={1360} y={740} w={47} h={24} t=".600" />

    <Balloon x={979} y={357} t="A3" />
    <Balloon x={668} y={562} t="A2" />
    <Balloon x={1528} y={587} t="A3" />

    <ModelText x="1077" y="460">Point5</ModelText>
    <ModelText x="1286" y="578">Point1</ModelText>
    <ModelText x="960" y="656">Point4</ModelText>
    <ModelText x="1194" y="656">Point3</ModelText>
    <ModelText x="922" y="695">Axis2</ModelText>
    <ModelText x="1235" y="695">Axis1</ModelText>
    <Star x={1077} y={465} />
    <Star x={960} y={660} />
    <Star x={1194} y={660} />
    <Plus x={920} y={700} />
    <Plus x={1233} y={700} />

    <path d="M325 887H350" stroke="#e81c1c" strokeWidth="4" />
    <polygon points="362,887 347,881 347,893" fill="#e81c1c" />
    <path d="M325 887V912" stroke="#1414c8" strokeWidth="4" />
    <polygon points="325,922 319,908 331,908" fill="#1414c8" />
    <circle cx="325" cy="887" r="4" fill="#24c024" />
    <path d="M323 882l-3-4M327 882l3-4" stroke="#24c024" />
    <text x="367" y="890" fontFamily="Open Sans" fontSize="11" fill="#a01818">X</text>
    <text x="321" y="934" fontFamily="Open Sans" fontSize="11" fill="#1414c8">Z</text>
    <text x="287" y="952" fontFamily="Open Sans" fontSize="15" fill="#1c2a22">*Top</text>
  </Scene>
);

const App: React.FC = () => (
  <Frame>
    <GlobalStyle />

    <Bar $h={41} $line>
      <Logo>
        <Ico n="swoosh" s={24} />
        <LogoMark>S</LogoMark>
        <LogoWord>
          <b>SOLID</b>WORKS
        </LogoWord>
      </Logo>
      <Menu $w={37}>File</Menu>
      <Menu $w={38}>Edit</Menu>
      <Menu $w={45}>View</Menu>
      <Menu $w={51}>Insert</Menu>
      <Menu $w={46}>Tools</Menu>
      <Menu $w={62}>Window</Menu>
      <Slot $w={20}>
        <Ico n="pin" s={15} />
      </Slot>
      <Slot $w={4} />
      <VDivider $h={38} />
      <Slot $w={20} />
      <Slot $w={26}><Ico n="home" /></Slot>
      <Slot $w={8} />
      <Slot $w={24}><Ico n="doc" /></Slot>
      <Caret $w={20} />
      <Slot $w={24}><Ico n="open" /></Slot>
      <Caret $w={26} />
      <Slot $w={24}><Ico n="save" /></Slot>
      <Caret $w={22} />
      <Slot $w={24}><Ico n="print" /></Slot>
      <Caret $w={23} />
      <Slot $w={24}><Ico n="undo" /></Slot>
      <Caret $w={20} />
      <Slot $w={28} $bg="#222"><Ico n="cursor" /></Slot>
      <CaretCell $w={18} />
      <Slot $w={32}><Ico n="light" /></Slot>
      <Slot $w={28}><Ico n="list" s={20} /></Slot>
      <Slot $w={42}><Ico n="gear" s={18} /></Slot>
      <Caret $w={8} />
      <Spacer />
      <DocTitle>205ET0991_ASSIGN_9C--P *</DocTitle>
      <SearchBox>
        <Ico n="sum" s={18} />
        <SearchLabel>Search Commands</SearchLabel>
        <Search size={18} color="#888" strokeWidth={1.4} />
        <Caret />
      </SearchBox>
      <Slot $w={50}><Ico n="user" /></Slot>
      <Slot $w={32}><CircleHelp size={22} color="#eee" strokeWidth={1.6} /></Slot>
      <Slot $w={50}><Ico n="minus" s={18} /></Slot>
      <Slot $w={30}><Ico n="tile" s={18} /></Slot>
      <Slot $w={52}><Ico n="restore" s={18} /></Slot>
      <Slot $w={30}><X size={18} color="#eee" /></Slot>
      <Slot $w={2} />
    </Bar>

    <Bar $h={32} $line>
      <Slot $w={6}><Ico n="grip" s={26} /></Slot>
      {tool2.map(([n, w, dim], i) =>
        n === "caret" ? (
          <Caret key={i} $w={w} />
        ) : n === "sep" ? (
          <VDivider key={i} $h={26} $mx={2} />
        ) : n === "sep2" ? (
          <VDivider key={i} />
        ) : (
          <Slot key={i} $w={w}>
            <Ico n={n as string} s={n === "grip" ? 26 : 21} dim={dim} />
          </Slot>
        )
      )}
      <VDivider />
    </Bar>

    <Ribbon $h={81} $line>
      <RibbonBtn $w={120}><Ico n="auto" s={24} />Auto Dimension<br />Scheme</RibbonBtn>
      <RibbonBtn $w={62}><Ico n="loc" s={24} />Location<br />Dimension</RibbonBtn>
      <RibbonBtn $w={88}><Ico n="size" s={24} />Size<br />Dimension</RibbonBtn>
      <RibbonWide $w={152}>
        <Ico n="basic" s={24} />
        Basic Location Dimension
        <RibbonCaret />
      </RibbonWide>
      <RibbonBtn $w={68}><Ico n="pattern" s={24} />Pattern<br />Feature</RibbonBtn>
      <RibbonBtn $w={39}><Ico n="datum" s={24} />Datum</RibbonBtn>
      <RibbonBtn $w={80} $pl={6}><Ico n="geo" s={24} />Geometric<br />Tolerance</RibbonBtn>
      <RibbonSep />
      <RibbonBtn $w={107}><Ico n="tol" s={24} />Show Tolerance<br />Status</RibbonBtn>
      <RibbonSep />
      <RibbonBtn $w={72} $dim><Ico n="analyst" s={24} dim />TolAnalyst<br />Study</RibbonBtn>
    </Ribbon>

    <Main>
      <TabStrip>
        <TopTab $w={74}>Features</TopTab>
        <TopTab $w={62}>Sketch</TopTab>
        <TopTab $w={87}>Sketch Ink</TopTab>
        <TopTab $w={74}>Surfaces</TopTab>
        <TopTab $w={98}>Sheet Metal</TopTab>
        <TopTab $w={93}>Weldments</TopTab>
        <TopTab $w={70}>Markup</TopTab>
        <TopTab $w={74}>Evaluate</TopTab>
        <TopTab $w={146} $on>MBD Dimensions</TopTab>
        <TopTab $w={173}>SOLIDWORKS Add-Ins</TopTab>
      </TabStrip>

      <Panel>
        <PanelHead />
        <PanelTabs>
          <PanelTab><Ico n="part" s={20} /></PanelTab>
          <PanelTab><Ico n="list" s={20} /></PanelTab>
          <PanelTab><Ico n="configTree" s={20} /></PanelTab>
          <PanelTab $on><Ico n="cross" s={21} /></PanelTab>
          <PanelTab><Ico n="ball" s={20} /></PanelTab>
        </PanelTabs>
        <PanelTools>
          <Ico n="auto" s={21} />
          <Ico n="geoDim" s={21} dim />
          <Ico n="basic" s={21} />
          <Ico n="arrowBox" s={21} />
          <Ico n="green" s={21} />
          <Ico n="tol" s={21} />
          <Ico n="tool" s={21} dim />
          <Ico n="blueTarget" s={21} dim />
          <Ico n="analyst" s={21} dim />
        </PanelTools>
        <TreeWrap>
          <Tree>
            {tree.map((r) => (
              <Row key={r.t}>
                <Slot $w={20}>
                  {r.root ? <Ico n="part" s={22} /> : r.a ? <Arrow $open={r.a === "o"} /> : null}
                </Slot>
                {r.lvl ? <Slot $w={23} /> : null}
                {r.root ? (
                  <Slot $w={26}><Ico n="stop" s={18} /></Slot>
                ) : (
                  <Slot $w={26}><Ico n={r.i as string} s={21} /></Slot>
                )}
                {!r.root && r.x ? <Slot $w={24}><Ico n={r.x} s={18} /></Slot> : null}
                <Label $tone={r.c}>{r.t}</Label>
              </Row>
            ))}
          </Tree>
          <VScroll>
            <ScrollBtn><ChevronUp size={16} strokeWidth={2.4} /></ScrollBtn>
            <VThumb />
            <Spacer />
            <ScrollBtn><ChevronDown size={16} strokeWidth={2.4} /></ScrollBtn>
          </VScroll>
        </TreeWrap>
        <HScroll>
          <HLeft><ChevronLeft size={16} strokeWidth={2.4} /></HLeft>
          <HThumb />
          <Spacer />
          <HRight><ChevronRight size={16} strokeWidth={2.4} /></HRight>
        </HScroll>
      </Panel>

      <Viewport>
        <Model />
        <SideHandle />
        <HudBar>
          {hud.map(([n, w], i) =>
            n === "caret" ? (
              <Caret key={i} $w={w} />
            ) : (
              <HudSlot key={i} $w={w}>
                <Ico n={n} s={18} />
              </HudSlot>
            )
          )}
        </HudBar>
        <ViewCtrls>
          <Ico n="tile" s={16} />
          <Ico n="tile" s={16} />
          <Ico n="minus" s={16} />
          <Ico n="restore" s={16} />
          <X size={16} color="#9fc0da" />
        </ViewCtrls>
        <TaskTabs>
          <TaskTab $on><Ico n="home" /></TaskTab>
          <TaskTab><Ico n="parts" /></TaskTab>
          <TaskTab><Ico n="folder" /></TaskTab>
          <TaskTab><Ico n="palette" /></TaskTab>
          <TaskTab><Ico n="ball" s={18} /></TaskTab>
          <TaskTab><Ico n="list" /></TaskTab>
          <TaskTab><Ico n="chat" /></TaskTab>
        </TaskTabs>
      </Viewport>

      <RightBar>
        <GripH />
        {rightIcons.map(([n, dim], i) => (
          <Ico key={i} n={n} s={22} dim={dim} />
        ))}
        <RightEnd />
      </RightBar>
    </Main>

    <BottomStrip $h={20}>
      <NavBlock />
      <NavBtn>◀</NavBtn>
      <NavBtn>◀</NavBtn>
      <NavBtn>▶</NavBtn>
      <NavBtn>▶</NavBtn>
      <ModelTab $w={76} $on>Model</ModelTab>
      <ModelTab $w={143}>Motion Study 1</ModelTab>
      <StripEnd />
    </BottomStrip>

    <Bar $h={33}>
      <Slot $w={10}><Ico n="grip" s={30} /></Slot>
      <Slot $w={27}><Ico n="hatch" s={21} dim /></Slot>
      <Slot $w={26}><Ico n="stack" s={21} dim /></Slot>
      <Slot $w={26}><Ico n="brush" s={21} dim /></Slot>
      <Slot $w={28}><Ico n="bars" s={22} /></Slot>
      <Slot $w={27}><Ico n="grid" s={22} /></Slot>
      <Slot $w={27}><Ico n="rollback" s={21} dim /></Slot>
      <Slot $w={27}><Ico n="graph" s={22} /></Slot>
      <Slot $w={11} />
      <VDivider $h={31} />
    </Bar>

    <StatusBar $h={22}>
      <StatusItem $w={1590}>SOLIDWORKS Student Edition - Academic Use Only</StatusItem>
      <StatusItem $w={213}>Editing Part</StatusItem>
      <StatusItem $w={50}>IPS</StatusItem>
      <Caret $up $w={20} />
      <Slot $w={18} />
      <Ico n="eject" s={16} />
    </StatusBar>
  </Frame>
);

export default App;
